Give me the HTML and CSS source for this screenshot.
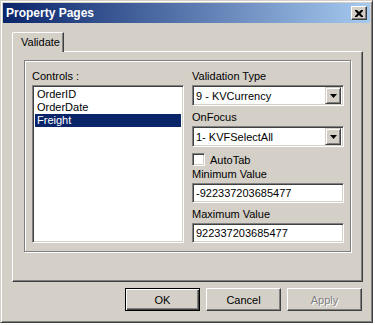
FILE: index.html
```html
<!DOCTYPE html>
<html lang="en">
<head>
  <meta charset="UTF-8">
  <title>Property Pages</title>
  <link rel="stylesheet" href="styles.css">
</head>
<body>
  <div class="window">
    <div class="titlebar">
      <span class="title">Property Pages</span>
      <button class="close">
        <svg width="8" height="7" viewBox="0 0 8 7"><path d="M0 0h2l2 2 2-2h2v1l-2.5 2.5L8 6v1H6L4 5 2 7H0V6l2.5-2.5L0 1z" fill="#000"/></svg>
      </button>
    </div>

    <div class="content">
      <div class="tabs">
        <div class="tab">Validate</div>
      </div>
      <div class="panel">
        <div class="group">
          <div class="col">
            <div class="label">Controls :</div>
            <div class="listbox">
              <div class="item">OrderID</div>
              <div class="item">OrderDate</div>
              <div class="item selected">Freight</div>
            </div>
          </div>
          <div class="col">
            <div class="label">Validation Type</div>
            <div class="combo">
              <span class="value">9 - KVCurrency</span>
              <span class="arrow"><svg width="7" height="4" viewBox="0 0 7 4"><path d="M0 0h7L3.5 4z" fill="#000"/></svg></span>
            </div>
            <div class="label spaced">OnFocus</div>
            <div class="combo">
              <span class="value">1- KVFSelectAll</span>
              <span class="arrow"><svg width="7" height="4" viewBox="0 0 7 4"><path d="M0 0h7L3.5 4z" fill="#000"/></svg></span>
            </div>
            <label class="check">
              <span class="box"></span>
              AutoTab
            </label>
            <div class="label">Minimum Value</div>
            <div class="edit">-922337203685477</div>
            <div class="label spaced">Maximum Value</div>
            <div class="edit">922337203685477</div>
          </div>
        </div>
      </div>

      <div class="buttons">
        <button class="btn default">OK</button>
        <button class="btn">Cancel</button>
        <button class="btn disabled">Apply</button>
      </div>
    </div>
  </div>
</body>
</html>
```

FILE: styles.css
```css
body {
  margin: 0;
  background: #ffffff;
  font-family: 'Liberation Sans', Arial, sans-serif;
  font-size: 11px;
  color: #000;
}

.window {
  width: 373px;
  height: 323px;
  box-sizing: border-box;
  background: #d4d0c8;
  border: 1px solid;
  border-color: #d4d0c8 #404040 #404040 #d4d0c8;
  box-shadow: inset 1px 1px 0 #ffffff, inset -1px -1px 0 #808080;
  padding: 2px;
}

.titlebar {
  height: 20px;
  display: flex;
  align-items: center;
  justify-content: space-between;
  padding: 0 3px 0 3px;
  background: linear-gradient(to right, #0a246a, #a6caf0);
}

.title {
  color: #ffffff;
  font-weight: bold;
  font-size: 12px;
}

.close {
  width: 16px;
  height: 14px;
  padding: 0;
  display: flex;
  align-items: center;
  justify-content: center;
  background: #d4d0c8;
  border: 1px solid;
  border-color: #ffffff #404040 #404040 #ffffff;
  box-shadow: inset -1px -1px 0 #808080;
}

.content {
  padding: 9px 7px 0 9px;
}

.tabs {
  display: flex;
}

.tab {
  position: relative;
  z-index: 1;
  width: 52px;
  height: 20px;
  margin-bottom: -1px;
  box-sizing: border-box;
  padding: 3px 0 0 8px;
  background: #d4d0c8;
  border-left: 1px solid #ffffff;
  border-top: 1px solid #ffffff;
  border-right: 1px solid #404040;
  box-shadow: inset -1px 0 0 #808080;
  border-top-left-radius: 2px;
}

.panel {
  height: 231px;
  box-sizing: border-box;
  border: 1px solid;
  border-color: #ffffff #404040 #404040 #ffffff;
  box-shadow: inset -1px -1px 0 #808080;
  padding: 8px 0 0 11px;
}

.group {
  width: 327px;
  height: 192px;
  box-sizing: border-box;
  border: 1px solid #808080;
  box-shadow: 1px 1px 0 #ffffff, inset 1px 1px 0 #ffffff;
  display: flex;
  gap: 8px;
  padding: 8px 0 0 7px;
}

.col {
  width: 152px;
  display: flex;
  flex-direction: column;
}

.label {
  height: 14px;
  line-height: 14px;
  margin-bottom: 2px;
}

.label.spaced {
  margin-top: 4px;
}

.listbox {
  height: 158px;
  box-sizing: border-box;
  background: #ffffff;
  border: 1px solid;
  border-color: #808080 #ffffff #ffffff #808080;
  box-shadow: inset 1px 1px 0 #404040, inset -1px -1px 0 #d4d0c8;
  padding: 2px 2px 0 2px;
}

.item {
  height: 13px;
  line-height: 13px;
  padding-left: 2px;
}

.item.selected {
  background: #0a246a;
  color: #ffffff;
}

.combo, .edit {
  height: 21px;
  box-sizing: border-box;
  background: #ffffff;
  border: 1px solid;
  border-color: #808080 #ffffff #ffffff #808080;
  box-shadow: inset 1px 1px 0 #404040, inset -1px -1px 0 #d4d0c8;
  display: flex;
  align-items: center;
  padding: 2px 2px 2px 3px;
}

.combo .value {
  flex: 1;
}

.edit {
  height: 20px;
}

.arrow {
  width: 16px;
  height: 17px;
  box-sizing: border-box;
  display: flex;
  align-items: center;
  justify-content: center;
  background: #d4d0c8;
  border: 1px solid;
  border-color: #d4d0c8 #404040 #404040 #d4d0c8;
  box-shadow: inset 1px 1px 0 #ffffff, inset -1px -1px 0 #808080;
}

.check {
  display: flex;
  align-items: center;
  gap: 5px;
  height: 13px;
  margin: 6px 0 1px 0;
}

.box {
  width: 13px;
  height: 13px;
  box-sizing: border-box;
  background: #ffffff;
  border: 1px solid;
  border-color: #808080 #ffffff #ffffff #808080;
  box-shadow: inset 1px 1px 0 #404040, inset -1px -1px 0 #d4d0c8;
}

.buttons {
  display: flex;
  justify-content: flex-end;
  gap: 6px;
  margin-top: 6px;
  padding-right: 1px;
}

.btn {
  width: 75px;
  height: 23px;
  box-sizing: border-box;
  font-family: inherit;
  font-size: 11px;
  background: #d4d0c8;
  border: 1px solid;
  border-color: #ffffff #404040 #404040 #ffffff;
  box-shadow: inset -1px -1px 0 #808080;
  padding: 0;
}

.btn.default {
  border: 1px solid #000000;
  box-shadow: inset 1px 1px 0 #ffffff, inset -1px -1px 0 #404040, inset -2px -2px 0 #808080;
}

.btn.disabled {
  color: #808080;
  text-shadow: 1px 1px 0 #ffffff;
}
```
